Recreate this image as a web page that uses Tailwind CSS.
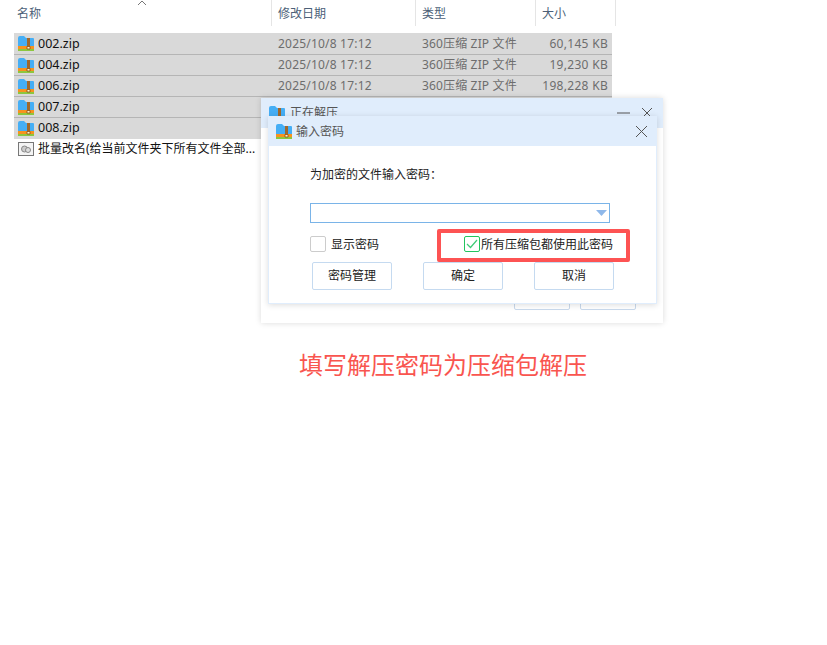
<!DOCTYPE html>
<html lang="zh-CN">
<head>
  <meta charset="UTF-8" />
  <meta name="viewport" content="width=device-width, initial-scale=1.0" />
  <title>输入密码</title>
  <script src="https://cdn.jsdelivr.net/npm/@tailwindcss/browser@4"></script>
</head>
<body class="bg-white">
  <svg class="hidden">
    <symbol id="zip" viewBox="0 0 16 15">
      <path d="M0 2Q0 0 2 0H6L8 2H15Q16 2 16 3V11H0Z" fill="#45aef5"/>
      <path d="M0 10H16V13H0Z" fill="#f7931e"/>
      <path d="M0 13H16V15H0Z" fill="#8cc63f"/>
      <path d="M9 2H12V10H9Z" fill="#a0682c"/>
      <path d="M9 10.5H12V13H9Z" fill="#fff3c4" stroke="#8a4b12" stroke-width="0.8"/>
    </symbol>
  </svg>

  <div class="relative w-[827px] h-[645px] overflow-hidden font-['Noto_Sans','Noto_Sans_CJK_SC',sans-serif] text-[12px]">
    <!-- column header -->
    <div class="relative flex h-[26px] text-[#4c5f78] leading-[28px]">
      <div class="w-[272px] border-r border-[#e5e5e5] pl-[17px]">名称</div>
      <div class="w-[144px] border-r border-[#e5e5e5] pl-[6px]">修改日期</div>
      <div class="w-[120px] border-r border-[#e5e5e5] pl-[6px]">类型</div>
      <div class="w-[80px] border-r border-[#e5e5e5] pl-[6px]">大小</div>
      <svg class="absolute left-[137px] top-0" width="10" height="6" viewBox="0 0 10 6" fill="none" stroke="#777"><path d="M1 5L5 1L9 5"/></svg>
    </div>

    <!-- files -->
    <div class="mt-[7px] ml-[14px] w-[598px] text-[12.5px]">
      <div class="flex items-center h-[22px] bg-[#d9d9d9] border-b border-[#b5b5b5]">
        <svg class="ml-[4px] w-[16px] h-[15px]"><use href="#zip"/></svg>
        <span class="ml-[4px] w-[240px] pt-[1px] text-[#111]">002.zip</span>
        <span class="w-[144px] pt-[1px] text-[12px] tracking-[0.2px] text-[#6d6d6d]">2025/10/8 17:12</span>
        <span class="w-[112px] pt-[1px] text-[12px] tracking-[0.15px] text-[#6d6d6d]">360压缩 ZIP 文件</span>
        <span class="w-[74px] pt-[1px] text-right text-[12px] tracking-[0.3px] text-[#6d6d6d]">60,145 KB</span>
      </div>
      <div class="flex items-center h-[21px] bg-[#d9d9d9] border-b border-[#b5b5b5]">
        <svg class="ml-[4px] w-[16px] h-[15px]"><use href="#zip"/></svg>
        <span class="ml-[4px] w-[240px] text-[#111]">004.zip</span>
        <span class="w-[144px] text-[12px] tracking-[0.2px] text-[#6d6d6d]">2025/10/8 17:12</span>
        <span class="w-[112px] text-[12px] tracking-[0.15px] text-[#6d6d6d]">360压缩 ZIP 文件</span>
        <span class="w-[74px] text-right text-[12px] tracking-[0.3px] text-[#6d6d6d]">19,230 KB</span>
      </div>
      <div class="flex items-center h-[21px] bg-[#d9d9d9] border-b border-[#b5b5b5]">
        <svg class="ml-[4px] w-[16px] h-[15px]"><use href="#zip"/></svg>
        <span class="ml-[4px] w-[240px] text-[#111]">006.zip</span>
        <span class="w-[144px] text-[12px] tracking-[0.2px] text-[#6d6d6d]">2025/10/8 17:12</span>
        <span class="w-[112px] text-[12px] tracking-[0.15px] text-[#6d6d6d]">360压缩 ZIP 文件</span>
        <span class="w-[74px] text-right text-[12px] tracking-[0.3px] text-[#6d6d6d]">198,228 KB</span>
      </div>
      <div class="flex items-center h-[21px] bg-[#d9d9d9] border-b border-[#b5b5b5]">
        <svg class="ml-[4px] w-[16px] h-[15px]"><use href="#zip"/></svg>
        <span class="ml-[4px] text-[#111]">007.zip</span>
      </div>
      <div class="flex items-center h-[21px] bg-[#d9d9d9]">
        <svg class="ml-[4px] w-[16px] h-[15px]"><use href="#zip"/></svg>
        <span class="ml-[4px] text-[#111]">008.zip</span>
      </div>
      <div class="flex items-center h-[20px]">
        <svg class="ml-[4px] w-[16px] h-[14px]" viewBox="0 0 16 14">
          <rect x="0.5" y="0.5" width="15" height="13" fill="#f4f4f4" stroke="#777"/>
          <circle cx="6.5" cy="7" r="3" fill="#ccc" stroke="#888"/>
          <circle cx="10" cy="8" r="2.5" fill="#ddd" stroke="#888"/>
        </svg>
        <span class="ml-[4px] text-[12px] text-[#111]">批量改名(给当前文件夹下所有文件全部...</span>
      </div>
    </div>

    <!-- back dialog -->
    <div class="absolute left-[261px] top-[98px] w-[402px] h-[225px] bg-white shadow-[0_0_6px_rgba(0,0,0,0.15)]">
      <div class="flex items-center h-[30px] bg-[#e0edfc] pl-[8px] text-[#555]">
        <svg class="w-[16px] h-[15px] shrink-0"><use href="#zip"/></svg>
        <span class="ml-[5px]">正在解压</span>
        <svg class="ml-auto" width="13" height="2"><rect width="13" height="1" y="0.5" fill="#555"/></svg>
        <svg class="ml-[11px] mr-[10px]" width="12" height="12" viewBox="0 0 12 12" stroke="#555" fill="none"><path d="M1 1L11 11M11 1L1 11"/></svg>
      </div>
      <div class="flex justify-end gap-[10px] pr-[27px] pt-[166px]">
        <div class="w-[56px] h-[16px] border border-[#c9d9ec] rounded-[2px]"></div>
        <div class="w-[56px] h-[16px] border border-[#c9d9ec] rounded-[2px]"></div>
      </div>
    </div>

    <!-- password dialog -->
    <div class="absolute left-[268px] top-[116px] w-[389px] h-[188px] bg-white border-x border-b border-[#e0edfc] shadow-[0_1px_6px_rgba(0,0,0,0.14)]">
      <div class="flex items-center h-[30px] bg-[#e0edfc] pl-[7px] text-[#555]">
        <svg class="w-[16px] h-[15px] shrink-0"><use href="#zip"/></svg>
        <span class="ml-[4px] pt-[1px]">输入密码</span>
        <svg class="ml-auto mr-[8px]" width="13" height="13" viewBox="0 0 13 13" stroke="#555" fill="none"><path d="M1 1L12 12M12 1L1 12"/></svg>
      </div>
      <div class="pl-[41px] pt-[20px] text-[#222]">
        <div class="h-[18px] leading-[18px]">为加密的文件输入密码：</div>
        <div class="mt-[19px] flex items-center justify-end w-[300px] h-[20px] border border-[#7ab4e8] pr-[2px]">
          <svg width="11" height="6" viewBox="0 0 11 6"><path d="M0 0H11L5.5 6Z" fill="#8fb8ea"/></svg>
        </div>
        <div class="mt-[13px] flex items-center h-[16px]">
          <div class="w-[16px] h-[16px] border border-[#ccc] rounded-[2px]"></div>
          <span class="ml-[5px] pt-[2px]">显示密码</span>
          <div class="ml-[85px] w-[16px] h-[16px] border border-[#22c55e] rounded-[2px] flex items-center justify-center">
            <svg width="12" height="10" viewBox="0 0 12 10" fill="none" stroke="#3fca77" stroke-width="1.2"><path d="M1 5L4.5 8.5L11 1"/></svg>
          </div>
          <span class="ml-[1px] pt-[2px]">所有压缩包都使用此密码</span>
        </div>
        <div class="mt-[10px] ml-[2px] flex gap-[31px]">
          <div class="w-[80px] h-[28px] leading-[26px] text-center border border-[#c5daf0] rounded-[2px]">密码管理</div>
          <div class="w-[80px] h-[28px] leading-[26px] text-center border border-[#c5daf0] rounded-[2px]">确定</div>
          <div class="w-[80px] h-[28px] leading-[26px] text-center border border-[#c5daf0] rounded-[2px]">取消</div>
        </div>
      </div>
    </div>

    <!-- highlight annotation -->
    <div class="absolute left-[437px] top-[229px] w-[193px] h-[33px] border-[4px] border-[#fd5353] rounded-[2px]"></div>
    <div class="absolute left-[299px] top-[347px] text-[24px] leading-[36px] text-[#f9554f]">填写解压密码为压缩包解压</div>
  </div>
</body>
</html>
